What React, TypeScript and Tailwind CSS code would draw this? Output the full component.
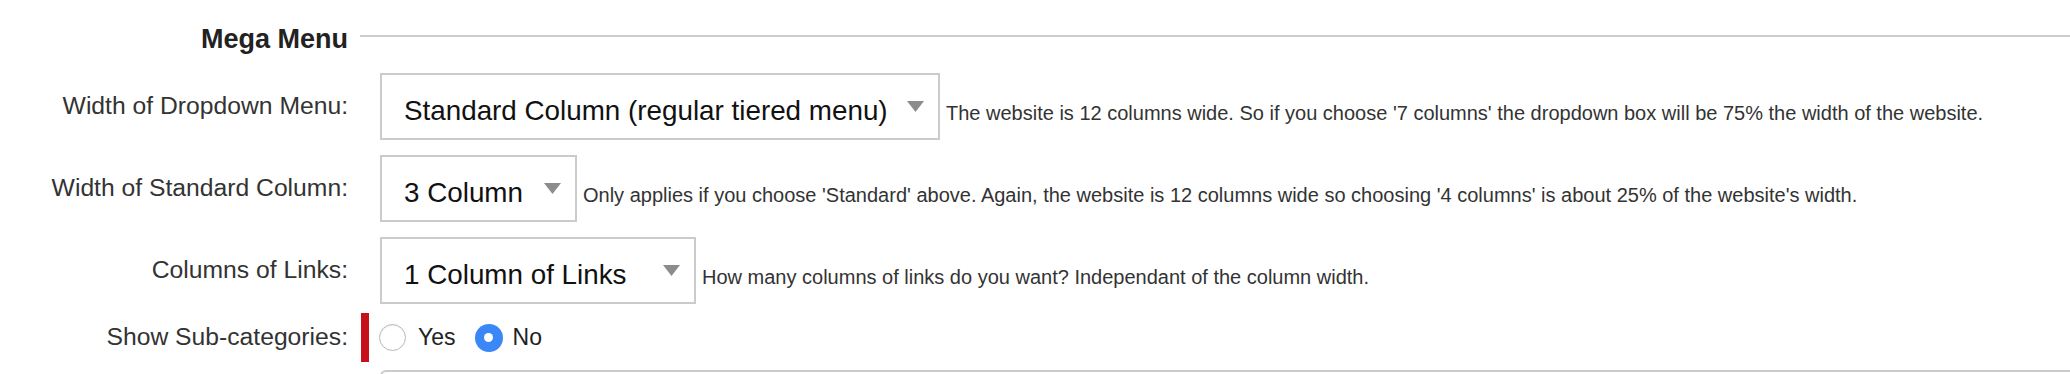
import { ReactNode } from 'react'

interface SelectRow {
  label: string
  value: string
  width: string
  help: string
}

const rows: SelectRow[] = [
  {
    label: 'Width of Dropdown Menu:',
    value: 'Standard Column (regular tiered menu)',
    width: 'w-[560px]',
    help: "The website is 12 columns wide. So if you choose '7 columns' the dropdown box will be 75% the width of the website.",
  },
  {
    label: 'Width of Standard Column:',
    value: '3 Column',
    width: 'w-[197px]',
    help: "Only applies if you choose 'Standard' above. Again, the website is 12 columns wide so choosing '4 columns' is about 25% of the website's width.",
  },
  {
    label: 'Columns of Links:',
    value: '1 Column of Links',
    width: 'w-[316px]',
    help: 'How many columns of links do you want? Independant of the column width.',
  },
]

const Label = ({ children }: { children: ReactNode }) => (
  <div className="w-[348px] shrink-0 text-right text-[24.7px] leading-none text-[#333]">{children}</div>
)

const Select = ({ value, width }: { value: string; width: string }) => (
  <div className={`${width} flex h-[67px] shrink-0 items-center border-2 border-[#cbcbcb] bg-white pl-[22px] pr-[14px]`}>
    <span className="mt-[8px] text-[27.8px] leading-none whitespace-nowrap text-[#111]">{value}</span>
    <svg className="ml-auto shrink-0" width="17" height="11" viewBox="0 0 17 11">
      <polygon points="0,0 17,0 8.5,11" fill="#8c8c8c" />
    </svg>
  </div>
)

const Radio = ({ checked }: { checked?: boolean }) =>
  checked ? (
    <span className="flex h-[28px] w-[28px] shrink-0 items-center justify-center rounded-full bg-[#3b87f7]">
      <span className="h-[9px] w-[9px] rounded-full bg-white" />
    </span>
  ) : (
    <span className="h-[27px] w-[27px] shrink-0 rounded-full border border-[#b9b9b9] bg-white shadow-[inset_0_1px_1px_rgba(0,0,0,0.08)]" />
  )

export default function App() {
  return (
    <div className="h-[374px] w-full overflow-hidden bg-white font-['Liberation_Sans',Arial,sans-serif]">
      {/* section header */}
      <div className="mt-[26px] flex h-[27px] items-center">
        <div className="w-[348px] shrink-0 text-right text-[27px] font-bold leading-none text-[#222]">Mega Menu</div>
        <div className="mb-[7px] ml-[12px] h-[2px] flex-1 bg-[#cdcdcd]" />
      </div>

      <div className="mt-[20px] flex flex-col gap-[15px]">
        {rows.map((row) => (
          <div key={row.label} className="flex items-center">
            <Label>{row.label}</Label>
            <div className="ml-[32px] flex items-baseline">
              <Select value={row.value} width={row.width} />
              <span className="ml-[6px] text-[20px] leading-none whitespace-nowrap text-[#333]">{row.help}</span>
            </div>
          </div>
        ))}
      </div>

      <div className="mt-[9px] flex items-center">
        <Label>Show Sub-categories:</Label>
        <div className="ml-[13px] flex h-[49px] items-center border-l-[8px] border-[#c8101a] pl-[10px] text-[23px] leading-none text-[#222]">
          <Radio />
          <span className="ml-[12px]">Yes</span>
          <span className="ml-[19px]">
            <Radio checked />
          </span>
          <span className="ml-[10px]">No</span>
        </div>
      </div>

      <div className="mt-[8px] flex">
        <div className="ml-[380px] h-[80px] w-[1720px] shrink-0 rounded-[6px] border-2 border-[#cbcbcb] bg-white" />
      </div>
    </div>
  )
}
